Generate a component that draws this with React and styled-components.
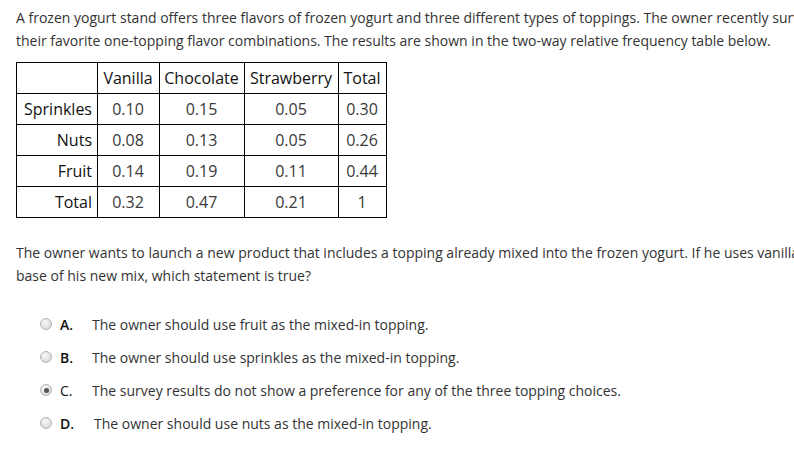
import React from "react";
import styled, { createGlobalStyle } from "styled-components";

const Global = createGlobalStyle`
  html, body { margin: 0; padding: 0; background: #fff; overflow: hidden; }
  body { font-family: "Open Sans", "Liberation Sans", sans-serif; color: #333; }
`;

const Page = styled.div`
  padding: 6px 0 0 16px;
  width: 1000px;
`;

const Para = styled.p`
  margin: 0;
  font-size: 14px;
  line-height: 23px;
  white-space: nowrap;
  margin-bottom: ${(p) => p.$mb || 0}px;
`;

const Table = styled.table`
  border-collapse: collapse;
  font-size: 16px;
  color: #333;
  margin-bottom: 23px;
`;

const Cell = styled.td`
  border: 1px solid #000;
  height: 31px;
  padding: 0 5px 0 4px;
  width: ${(p) => p.$w}px;
  box-sizing: border-box;
  text-align: ${(p) => p.$align || "center"};
  color: ${(p) => (p.$dark ? "#111" : "#3a3a3a")};
  line-height: 20px;
  white-space: nowrap;
`;

const Options = styled.div`
  display: flex;
  flex-direction: column;
  gap: 13px;
  padding: 27px 0 0 24px;
`;

const Option = styled.div`
  display: flex;
  align-items: center;
  height: 20px;
  font-size: 14px;
`;

const Radio = styled.span`
  width: 12px;
  height: 12px;
  border-radius: 50%;
  box-sizing: border-box;
  border: 1px solid #b5b5b5;
  background: radial-gradient(circle at 40% 35%, #f8f8f8 0%, #dcdcdc 70%, #c8c8c8 100%);
  display: flex;
  align-items: center;
  justify-content: center;
  margin-right: 8px;
  flex: none;
  &::after {
    content: "";
    width: 5px;
    height: 5px;
    border-radius: 50%;
    background: #555;
    display: ${(p) => (p.$checked ? "block" : "none")};
  }
`;

const Letter = styled.span`
  width: ${(p) => p.$w}px;
  font-weight: ${(p) => (p.$bold ? 600 : 400)};
  color: #111;
  flex: none;
`;

const OptText = styled.span`
  color: #333;
  white-space: nowrap;
`;

const widths = [81, 62, 85, 94, 48];
const header = ["", "Vanilla", "Chocolate", "Strawberry", "Total"];
const rows = [
  ["Sprinkles", "0.10", "0.15", "0.05", "0.30"],
  ["Nuts", "0.08", "0.13", "0.05", "0.26"],
  ["Fruit", "0.14", "0.19", "0.11", "0.44"],
  ["Total", "0.32", "0.47", "0.21", "1"],
];

const options = [
  { l: "A.", t: "The owner should use fruit as the mixed-in topping.", bold: true, w: 32 },
  { l: "B.", t: "The owner should use sprinkles as the mixed-in topping.", bold: true, w: 32 },
  { l: "C.", t: "The survey results do not show a preference for any of the three topping choices.", bold: false, checked: true, w: 32 },
  { l: "D.", t: "The owner should use nuts as the mixed-in topping.", bold: true, w: 34 },
];

export default function App() {
  return (
    <>
      <Global />
      <Page>
        <Para>
          A frozen yogurt stand offers three flavors of frozen yogurt and three different types of toppings. The owner recently surveyed his customers to determine
        </Para>
        <Para $mb={10}>
          their favorite one-topping flavor combinations. The results are shown in the two-way relative frequency table below.
        </Para>
        <Table>
          <tbody>
            <tr>
              {header.map((h, i) => (
                <Cell key={i} $w={widths[i]} $dark>
                  {h}
                </Cell>
              ))}
            </tr>
            {rows.map((r, ri) => (
              <tr key={ri}>
                {r.map((c, ci) => (
                  <Cell key={ci} $w={widths[ci]} $align={ci === 0 ? "right" : "center"} $dark={ci === 0}>
                    {c}
                  </Cell>
                ))}
              </tr>
            ))}
          </tbody>
        </Table>
        <Para>
          The owner wants to launch a new product that includes a topping already mixed into the frozen yogurt. If he uses vanilla as the
        </Para>
        <Para>base of his new mix, which statement is true?</Para>
        <Options>
          {options.map((o) => (
            <Option key={o.l}>
              <Radio $checked={o.checked} />
              <Letter $bold={o.bold} $w={o.w}>{o.l}</Letter>
              <OptText>{o.t}</OptText>
            </Option>
          ))}
        </Options>
      </Page>
    </>
  );
}
